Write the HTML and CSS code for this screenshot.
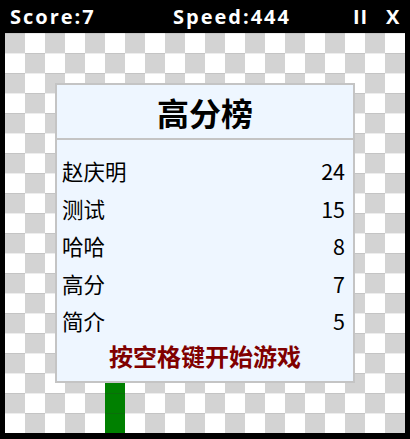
FILE: index.html
```html
<!DOCTYPE html>
<html lang="zh">
<head>
<meta charset="utf-8">
<title>贪吃蛇</title>
<link rel="stylesheet" href="styles.css">
</head>
<body>
<div class="game">
  <div class="topbar">
    <span class="score">Score:7</span>
    <span class="speed">Speed:444</span>
    <span class="pause">II</span>
    <span class="close">X</span>
  </div>
  <div class="board">
    <div class="seg" style="left:100px;top:340px"></div>
    <div class="seg" style="left:100px;top:360px"></div>
    <div class="seg" style="left:100px;top:380px"></div>
    <div class="panel">
      <div class="panel-title">高分榜</div>
      <ul class="ranks">
        <li><span>赵庆明</span><span>24</span></li>
        <li><span>测试</span><span>15</span></li>
        <li><span>哈哈</span><span>8</span></li>
        <li><span>高分</span><span>7</span></li>
        <li><span>简介</span><span>5</span></li>
      </ul>
      <div class="hint">按空格键开始游戏</div>
    </div>
  </div>
</div>
</body>
</html>
```
FILE: styles.css
```css
html, body {
  margin: 0;
  padding: 0;
  background: #000;
}
.game {
  width: 410px;
  height: 439px;
  background: #000;
  display: flex;
  flex-direction: column;
}
.topbar {
  height: 33px;
  display: flex;
  align-items: center;
  padding-left: 10px;
  color: #fff;
  font-family: "Open Sans", "Noto Sans", sans-serif;
  font-weight: 700;
  font-size: 20px;
  letter-spacing: 2px;
  line-height: 1;
}
.score { width: 163px; }
.speed { width: 180px; }
.pause { width: 33px; letter-spacing: 1px; }
.board {
  position: relative;
  margin-left: 5px;
  width: 400px;
  height: 400px;
  background-color: #fff;
  background-image:
    repeating-linear-gradient(to bottom, rgba(0,0,0,0.07) 0 1px, transparent 1px 20px),
    repeating-conic-gradient(#fff 0 25%, #d3d3d3 0 50%);
  background-size: 20px 20px, 40px 40px;
}
.seg {
  position: absolute;
  width: 20px;
  height: 20px;
  background: #008000;
  box-shadow: inset 0 1px 0 #0a6f0a;
}
.panel {
  position: absolute;
  left: 50px;
  top: 50px;
  width: 300px;
  height: 300px;
  box-sizing: border-box;
  border: 2px solid #c4c4c4;
  background: #eef6ff;
  display: flex;
  flex-direction: column;
  font-family: "Noto Sans CJK SC", "Noto Sans", sans-serif;
}
.panel-title {
  height: 53px;
  border-bottom: 2px solid #c4c4c4;
  display: flex;
  align-items: center;
  justify-content: center;
  font-size: 32px;
  font-weight: 700;
  color: #000;
  line-height: 1;
}
.ranks {
  list-style: none;
  margin: 0;
  padding: 12px 8px 0 5px;
}
.ranks li {
  height: 37.5px;
  display: flex;
  align-items: center;
  justify-content: space-between;
  font-size: 21.5px;
  color: #000;
  line-height: 1;
}
.hint {
  height: 33px;
  display: flex;
  align-items: center;
  justify-content: center;
  font-size: 24px;
  font-weight: 700;
  color: #800000;
  line-height: 1;
}
```
